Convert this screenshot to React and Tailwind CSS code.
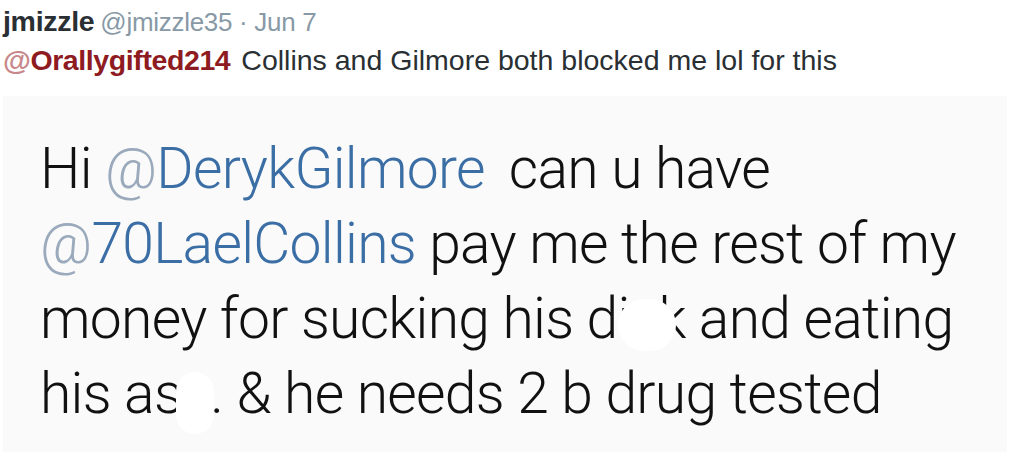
import React from 'react';

function Blob({ children, className }) {
  return (
    <span className="relative inline-block">
      {children}
      <span className={`absolute rounded-full bg-white ${className}`} />
    </span>
  );
}

export default function App() {
  return (
    <div className="w-[1010px] h-[452px] bg-white overflow-hidden font-['Liberation_Sans',Arial,sans-serif]">
      <div className="pl-[3px] pt-[4px]">
        <div className="flex items-baseline gap-[6px] leading-[34px]">
          <span className="text-[28.5px] font-bold text-[#292f33] tracking-[-0.3px]">jmizzle</span>
          <span className="text-[26px] text-[#8899a6] tracking-[-0.3px]">@jmizzle35 · Jun 7</span>
        </div>
        <div className="mt-[3px] text-[28.5px] leading-[36px] text-[#292f33]">
          <span className="font-bold text-[#8e1b1f] tracking-[-0.4px]"><span className="text-[#c8878a]">@</span>Orallygifted214</span>
          <span className="ml-[11px]">Collins and Gilmore both blocked me lol for this</span>
        </div>
      </div>

      <div className="mx-[3px] mt-[18px] h-[360px] bg-[#fafafa] pl-[37px] pt-[35px] font-['Roboto',sans-serif] font-light text-[57px] leading-[75px] text-[#111] tracking-[-0.7px]">
        <div>
          Hi <span className="text-[#3a6ea5]"><span className="text-[#9aa9bb]">@</span>DerykGilmore</span>
          <span className="ml-[24px]">can u have</span>
        </div>
        <div>
          <span className="text-[#3a6ea5]"><span className="text-[#9aa9bb]">@</span>70LaelCollins</span> pay me the rest of my
        </div>
        <div>
          money for sucking his di<Blob className="left-[-12px] top-[18px] w-[58px] h-[52px]">c</Blob>k and eating
        </div>
        <div>
          his as<Blob className="left-[-6px] top-[16px] w-[38px] h-[62px]">s</Blob>. &amp; he needs 2 b drug tested
        </div>
      </div>
    </div>
  );
}
